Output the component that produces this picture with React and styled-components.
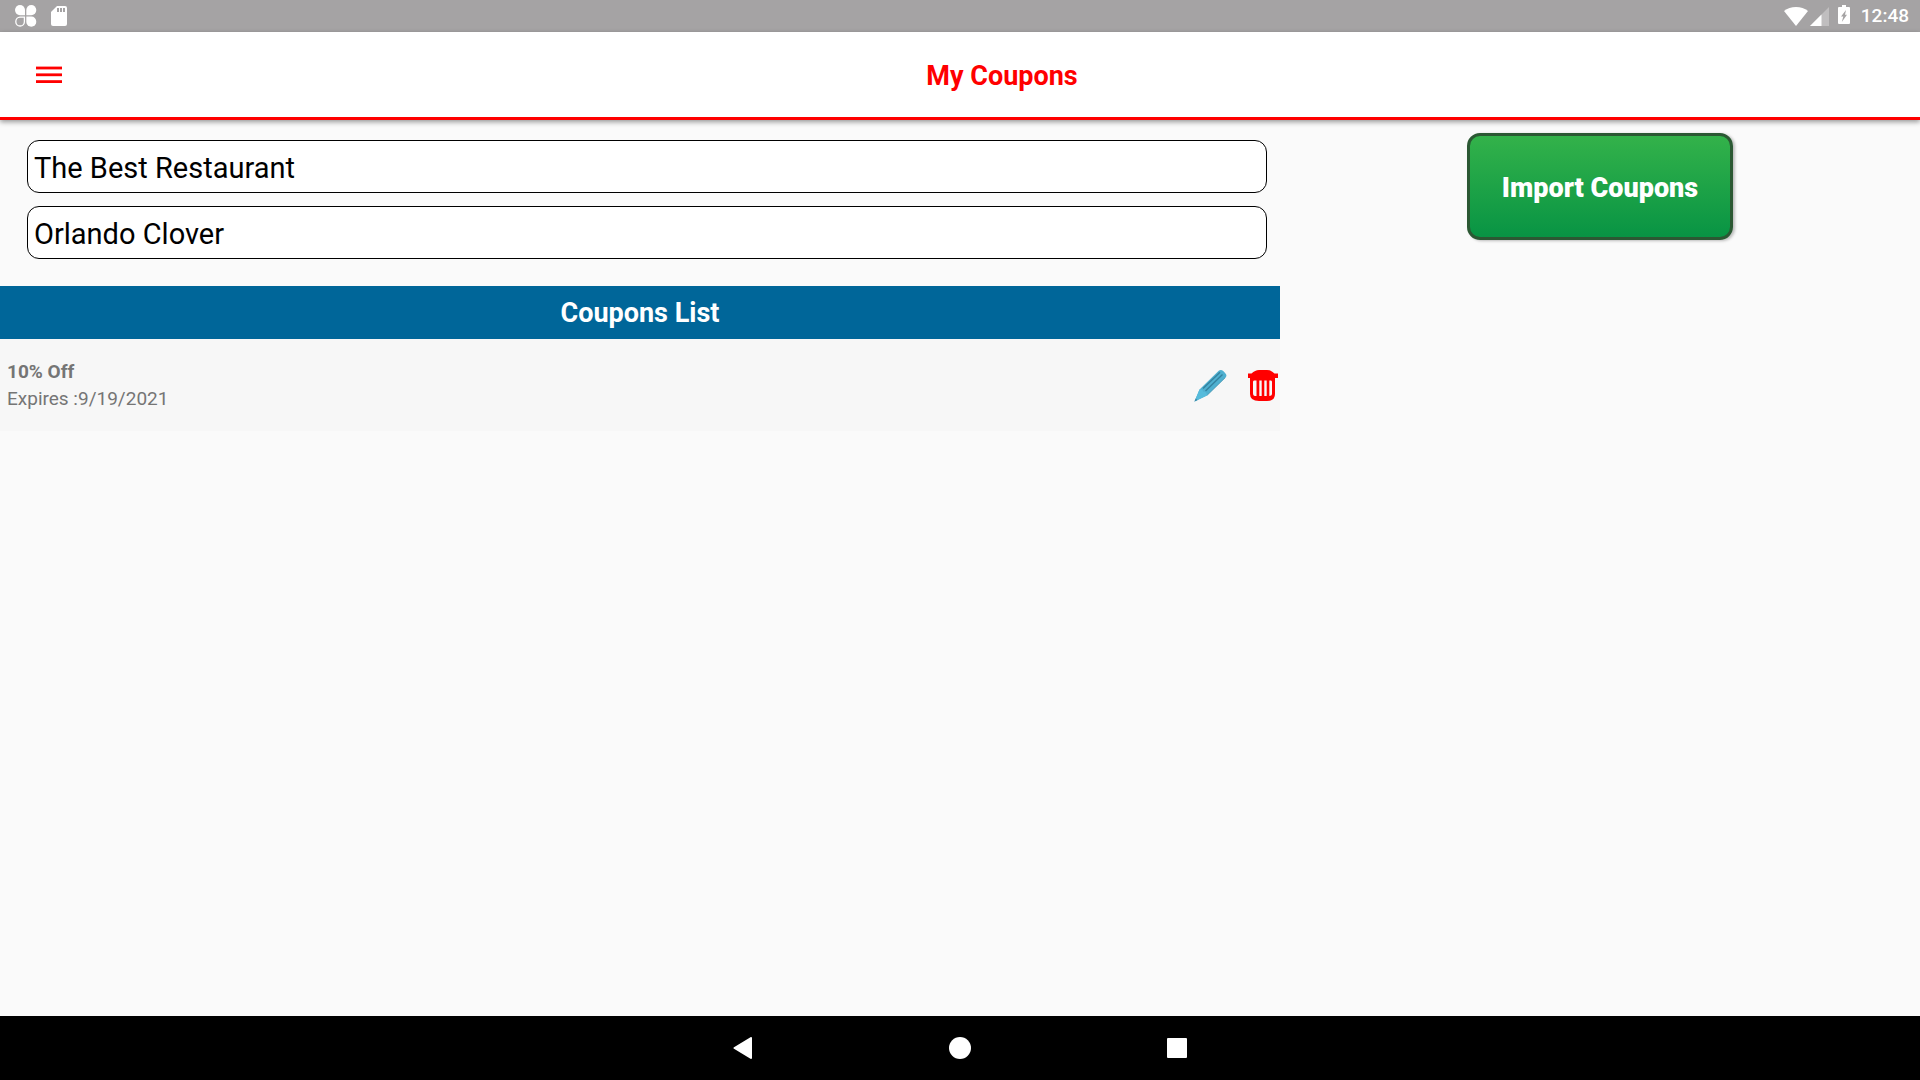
import React, { useState } from 'react'
import styled, { createGlobalStyle } from 'styled-components'

const GlobalStyle = createGlobalStyle`
  * {
    box-sizing: border-box;
  }

  body {
    margin: 0;
    background-color: #fafafa;
    font-family: Roboto, sans-serif;
  }

  button {
    padding: 0;
    border: none;
    background: none;
    font-family: inherit;
    cursor: pointer;
  }

  svg {
    display: block;
  }
`

const Screen = styled.div`
  min-height: 100vh;
  display: flex;
  flex-direction: column;
`

const StatusBar = styled.div`
  height: 32px;
  padding: 0 11px 0 15px;
  display: flex;
  justify-content: space-between;
  align-items: center;
  background-color: #a5a3a4;
  color: white;
`

const StatusGroup = styled.div`
  display: flex;
  align-items: center;
  gap: ${({ $gap }) => $gap}px;
`

const Clock = styled.time`
  margin-left: 2px;
  font-size: 19px;
  font-weight: 500;
  line-height: 32px;
`

const Header = styled.header`
  height: 88px;
  display: flex;
  align-items: center;
  background-color: white;
  border-bottom: 3px solid #ff0000;
  box-shadow: 0 2px 5px rgba(0, 0, 0, 0.4);
`

const MenuButton = styled.button`
  width: 84px;
  height: 84px;
  padding-left: 36px;
`

const Title = styled.h1`
  flex: 1;
  margin: 0;
  padding-top: 2px;
  color: #ff0000;
  font-size: 27px;
  font-weight: 700;
  line-height: 36px;
  text-align: center;
`

const Content = styled.main`
  flex: 1;
  display: grid;
  grid-template-columns: 2fr 1fr;
  align-items: start;
`

const Fields = styled.form`
  padding: 20px 13px 27px 27px;
  display: flex;
  flex-direction: column;
  gap: 13px;
`

const Field = styled.input`
  width: 100%;
  height: 53px;
  padding: 2px 6px 0;
  border: 1px solid black;
  border-radius: 12px;
  background-color: white;
  color: black;
  font-family: inherit;
  font-size: 29px;
`

const ListTitle = styled.h2`
  margin: 0;
  padding: 2px 0 0;
  background-color: #006699;
  color: white;
  font-size: 27px;
  font-weight: 700;
  line-height: 51px;
  text-align: center;
`

const List = styled.ul`
  margin: 0;
  padding: 0;
  list-style: none;
`

const Coupon = styled.li`
  height: 92px;
  padding: 0 2px 0 7px;
  display: flex;
  justify-content: space-between;
  align-items: center;
  background-color: #f7f7f7;
`

const CouponText = styled.p`
  margin: 0;
  color: #757575;
  font-size: 19px;
  font-weight: ${({ $bold }) => ($bold ? 700 : 400)};
  line-height: 27px;
`

const Actions = styled.div`
  display: flex;
  align-items: center;
  gap: 21px;
`

const Side = styled.aside`
  padding-top: 13px;
  display: flex;
  justify-content: center;
`

const ImportButton = styled.button`
  width: 266px;
  height: 107px;
  padding-top: 2px;
  border: 3px solid #2b5833;
  border-radius: 13px;
  background: linear-gradient(#33b24a, #089444);
  box-shadow: 2px 1px 3px rgba(0, 0, 0, 0.25);
  color: white;
  font-size: 27px;
  font-weight: 900;
`

const NavBar = styled.nav`
  height: 64px;
  display: flex;
  justify-content: center;
  align-items: center;
  gap: 153px;
  background-color: black;
`

const NavButton = styled.button`
  width: 64px;
  height: 64px;
  display: flex;
  justify-content: center;
  align-items: center;
`

const CloverIcon = () => (
  <svg width="22" height="22" viewBox="0 0 22 22" fill="white">
    <path d="M10 10.2H5A5 5.1 0 1 1 10 5.1Z" />
    <path d="M11.3 10.2V5.1A5 5.1 0 1 1 16.3 10.2Z" />
    <path d="M11.3 11.6H16.3A5 5.1 0 1 1 11.3 16.7Z" />
    <path
      d="M9.4 12.2H5A4.3 4.4 0 1 0 9.4 16.7Z"
      fill="none"
      stroke="white"
      strokeWidth="1.3"
    />
  </svg>
)

const SdCardIcon = () => (
  <svg width="16" height="20" viewBox="0 0 16 20">
    <path
      d="M6 0H14Q16 0 16 2V18Q16 20 14 20H2Q0 20 0 18V6Z"
      fill="white"
    />
    <path d="M6 2H8V6H6ZM9 2H11V6H9ZM12 2H14V6H12Z" fill="#a5a3a4" />
  </svg>
)

const WifiIcon = () => (
  <svg width="24" height="19" viewBox="0 0 24 19">
    <path d="M0 4Q5 0 12 0T24 4L12 19Z" fill="white" />
  </svg>
)

const SignalIcon = () => (
  <svg width="19" height="19" viewBox="0 0 19 19">
    <path d="M19 0V19H0Z" fill="white" fillOpacity="0.3" />
    <path d="M11.5 7.5V19H0Z" fill="white" />
  </svg>
)

const BatteryIcon = () => (
  <svg width="12" height="22" viewBox="0 0 12 22">
    <path
      d="M4 0H8V2H11Q12 2 12 3V18Q12 19 11 19H1Q0 19 0 18V3Q0 2 1 2H4Z"
      fill="white"
    />
    <path d="M8 5L3 11.5H5.3L3.8 17L9 9.7H7Z" fill="#a5a3a4" />
  </svg>
)

const MenuIcon = () => (
  <svg width="26" height="18" viewBox="0 0 26 18" fill="#ff0000">
    <rect y="0.6" width="26" height="2.8" />
    <rect y="7.4" width="26" height="2.8" />
    <rect y="14.2" width="26" height="2.8" />
  </svg>
)

const PencilIcon = () => (
  <svg width="33" height="33" viewBox="0 0 33 33">
    <path
      d="M0.5 32.5L5.5 20.5L25 1.5Q27 0 29.5 2.2L31.3 4.2Q33.5 6.5 31.5 8.5L13 26.5Z"
      fill="#4fb0d0"
    />
    <path
      d="M9 19.5L26 3.2M11.5 22L28.5 5.5"
      stroke="#34829f"
      strokeWidth="1.4"
    />
    <path
      d="M13.2 26.2L31.3 8.6"
      stroke="#4694b0"
      strokeWidth="0.8"
    />
    <path
      d="M5.5 20.5Q8.5 19.5 9.3 22.8Q13 22.5 13 26.5L0.5 32.5Z"
      fill="#56bbdb"
    />
    <path d="M0.5 32.5L1.8 29.4L3.6 31.1Z" fill="#3d88a5" />
  </svg>
)

const TrashIcon = () => (
  <svg width="30" height="31" viewBox="0 0 30 31">
    <path
      d="M0 3.5H3.5Q7 0 11 0H19Q23 0 26.5 3.5H30V8H27V24Q27 31 19 31H11Q2 31 2 24V8H0Z"
      fill="#ff0000"
    />
    <path
      d="M6 10.5H8.5V26H7Q5 26 5 23V12Q5 10.5 6 10.5ZM11.3 10.5H13.7V26H11.3ZM16.3 10.5H18.7V26H16.3ZM21.3 10.5H23Q24 10.5 24 12V24Q24 26 21.3 26Z"
      fill="#f7f7f7"
    />
  </svg>
)

const coupons = [{ id: 1, name: '10% Off', expires: '9/19/2021' }]

const App = () => {
  const [restaurant, setRestaurant] = useState('The Best Restaurant')
  const [location, setLocation] = useState('Orlando Clover')

  return (
    <Screen>
      <GlobalStyle />
      <StatusBar>
        <StatusGroup $gap={14}>
          <CloverIcon />
          <SdCardIcon />
        </StatusGroup>
        <StatusGroup $gap={9}>
          <StatusGroup $gap={2}>
            <WifiIcon />
            <SignalIcon />
          </StatusGroup>
          <BatteryIcon />
          <Clock>12:48</Clock>
        </StatusGroup>
      </StatusBar>

      <Header>
        <MenuButton aria-label="Menu">
          <MenuIcon />
        </MenuButton>
        <Title>My Coupons</Title>
      </Header>

      <Content>
        <section>
          <Fields>
            <Field
              aria-label="Restaurant"
              value={restaurant}
              onChange={(event) => setRestaurant(event.target.value)}
            />
            <Field
              aria-label="Location"
              value={location}
              onChange={(event) => setLocation(event.target.value)}
            />
          </Fields>
          <ListTitle>Coupons List</ListTitle>
          <List>
            {coupons.map((coupon) => (
              <Coupon key={coupon.id}>
                <div>
                  <CouponText $bold>{coupon.name}</CouponText>
                  <CouponText>Expires :{coupon.expires}</CouponText>
                </div>
                <Actions>
                  <button aria-label="Edit coupon">
                    <PencilIcon />
                  </button>
                  <button aria-label="Delete coupon">
                    <TrashIcon />
                  </button>
                </Actions>
              </Coupon>
            ))}
          </List>
        </section>
        <Side>
          <ImportButton>Import Coupons</ImportButton>
        </Side>
      </Content>

      <NavBar>
        <NavButton aria-label="Back">
          <svg width="20" height="22" viewBox="0 0 20 22">
            <path
              d="M18 1V21L1.5 11Z"
              fill="white"
              stroke="white"
              strokeWidth="2"
              strokeLinejoin="round"
            />
          </svg>
        </NavButton>
        <NavButton aria-label="Home">
          <svg width="22" height="22" viewBox="0 0 22 22">
            <circle cx="11" cy="11" r="11" fill="white" />
          </svg>
        </NavButton>
        <NavButton aria-label="Recent apps">
          <svg width="20" height="20" viewBox="0 0 20 20">
            <rect width="20" height="20" rx="1" fill="white" />
          </svg>
        </NavButton>
      </NavBar>
    </Screen>
  )
}

export default App
